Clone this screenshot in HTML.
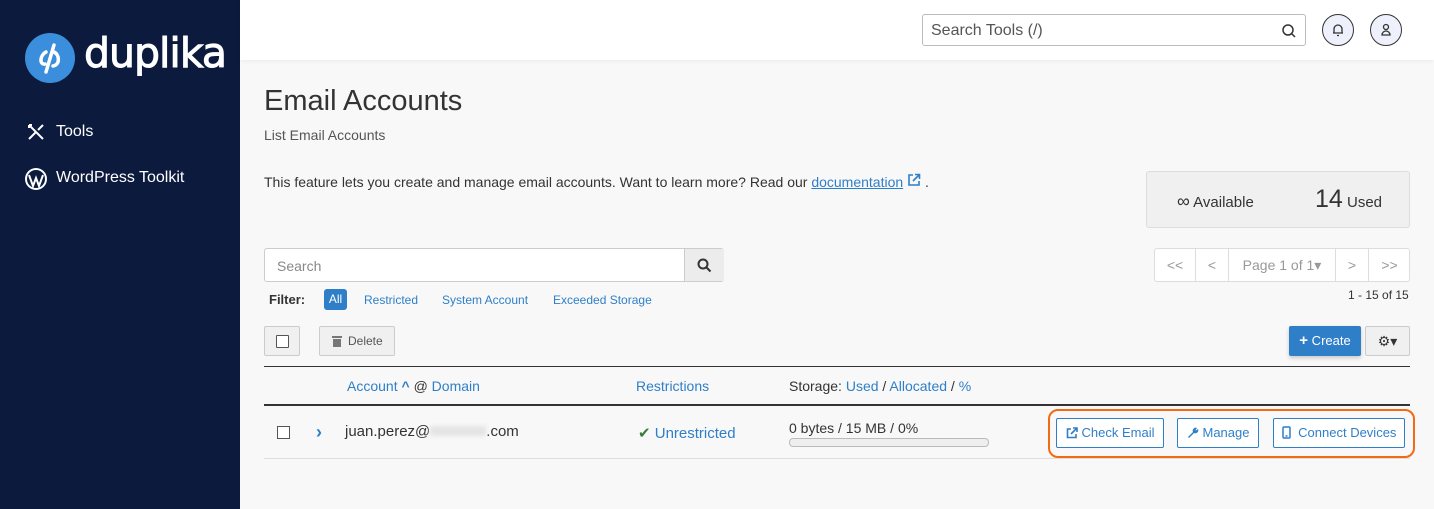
<!DOCTYPE html>
<html><head><meta charset="utf-8"><style>
*{box-sizing:border-box;margin:0;padding:0}
body{width:1434px;height:509px;overflow:hidden;font-family:"Liberation Sans",sans-serif;background:#f8f8f8;position:relative;color:#333}
.side{position:absolute;left:0;top:0;width:240px;height:509px;background:#0c1a3e}
.hdr{position:absolute;left:240px;top:0;right:0;height:60px;background:#fff;box-shadow:0 1px 4px rgba(0,0,0,.06)}
.abs{position:absolute}
a,.lnk{color:#2f7fc8}
.btn{position:absolute;border:1px solid #ccc;background:#f0f0f0;border-radius:2px}
.ob{position:absolute;border:1px solid #2f7fc8;border-radius:2px;color:#2f7fc8;font-size:13px;height:30px;line-height:28px;text-align:center;background:#fff}
.ob svg{vertical-align:-2px;margin-right:4px}
</style></head><body>
<div class="side">
 <svg class="abs" style="left:24px;top:32px" width="52" height="52" viewBox="0 0 52 52"><circle cx="26" cy="26" r="25" fill="#3a8edb"/><path d="M30 13 L22 40" stroke="#fff" stroke-width="3.5" stroke-linecap="round"/><path d="M22 20 C16 23 15 33 21 32 M30 20 C36 23 36 33 29 34" stroke="#fff" stroke-width="3.5" fill="none" stroke-linecap="round"/></svg>
 <div class="abs" style="left:84px;top:29px;color:#fff;font-size:41px;font-family:'DejaVu Sans',sans-serif;letter-spacing:-1px;-webkit-text-stroke:1px #fff">duplika</div>
 <svg class="abs" style="left:26px;top:122px" width="20" height="20" viewBox="0 0 20 20" stroke="#fff" stroke-width="2" fill="none"><path d="M3 17 L10 10 M12 8 L17 3 M3 3 L17 17 M3 3 l3 0 M3 3 l0 3"/></svg>
 <div class="abs" style="left:56px;top:123px;color:#fff;font-size:16px">Tools</div>
 <svg class="abs" style="left:24px;top:167px" width="24" height="24" viewBox="0 0 24 24"><circle cx="12" cy="12" r="11" fill="#fff"/><circle cx="12" cy="12" r="9" fill="#0c1a3e"/><path d="M5 8 L9 19 L12 11 L15 19 L19 8" stroke="#fff" stroke-width="2" fill="none"/></svg>
 <div class="abs" style="left:56px;top:169px;color:#fff;font-size:16px">WordPress Toolkit</div>
</div>
<div class="hdr">
 <div class="abs" style="left:682px;top:14px;width:384px;height:32px;border:1px solid #bbb;border-radius:3px;background:#fff"><span class="abs" style="left:8px;top:7px;font-size:16px;color:#555">Search Tools (/)</span>
 <svg class="abs" style="right:8px;top:8px" width="16" height="16" viewBox="0 0 16 16" fill="none" stroke="#333" stroke-width="1.5"><circle cx="7" cy="7" r="5"/><path d="M11 11 L14 14"/></svg></div>
 <div class="abs" style="left:1082px;top:14px;width:32px;height:32px;border:1.5px solid #333;border-radius:50%;background:#eef0fb"></div>
 <svg class="abs" style="left:1090px;top:22px" width="16" height="16" viewBox="0 0 16 16" fill="none" stroke="#333" stroke-width="1.3"><path d="M4 11 V7 a4 4 0 0 1 8 0 V11 Z M3 11 H13 M7 13.5 H9"/></svg>
 <div class="abs" style="left:1130px;top:14px;width:32px;height:32px;border:1.5px solid #333;border-radius:50%;background:#eef0fb"></div>
 <svg class="abs" style="left:1138px;top:22px" width="16" height="16" viewBox="0 0 16 16" fill="none" stroke="#333" stroke-width="1.3"><circle cx="8" cy="5" r="2.5"/><path d="M4 13 a4 4 0 0 1 8 0 Z"/></svg>
</div>
<div class="abs" style="left:264px;top:85px;font-size:29px;color:#333">Email Accounts</div>
<div class="abs" style="left:264px;top:127px;font-size:14px;color:#555">List Email Accounts</div>
<div class="abs" style="left:264px;top:173px;font-size:14px">This feature lets you create and manage email accounts. Want to learn more? Read our <span class="lnk" style="text-decoration:underline">documentation</span> <svg width="14" height="14" viewBox="0 0 14 14" fill="none" stroke="#2f7fc8" stroke-width="1.6"><path d="M6 2 H2 V12 H12 V8 M8 1.5 H12.5 V6 M12.5 1.5 L6 8"/></svg> .</div>
<div class="abs" style="left:1146px;top:171px;width:264px;height:57px;background:#f0f0f0;border:1px solid #ddd;border-radius:3px"></div>
<div class="abs" style="left:1177px;top:191px;font-size:15px;color:#333"><span style="font-size:18px">∞</span> Available</div>
<div class="abs" style="left:1315px;top:185px;font-size:15px;color:#333"><span style="font-size:25px">14</span> Used</div>
<div class="abs" style="left:1154px;top:248px;width:256px;height:34px;border:1px solid #ddd;border-radius:3px;background:#fff;font-size:14px;color:#999">
 <span class="abs" style="left:0;top:0;width:41px;height:32px;border-right:1px solid #ddd;text-align:center;line-height:32px">&lt;&lt;</span>
 <span class="abs" style="left:41px;top:0;width:33px;height:32px;border-right:1px solid #ddd;text-align:center;line-height:32px">&lt;</span>
 <span class="abs" style="left:74px;top:0;width:107px;height:32px;border-right:1px solid #ddd;text-align:center;line-height:32px">Page 1 of 1▾</span>
 <span class="abs" style="left:181px;top:0;width:33px;height:32px;border-right:1px solid #ddd;text-align:center;line-height:32px">&gt;</span>
 <span class="abs" style="left:214px;top:0;width:41px;height:32px;text-align:center;line-height:32px">&gt;&gt;</span>
</div>
<div class="abs" style="left:1348px;top:288px;font-size:12px;color:#333">1 - 15 of 15</div>
<div class="abs" style="left:264px;top:248px;width:460px;height:34px;border:1px solid #ccc;border-radius:3px;background:#fff"><span class="abs" style="left:12px;top:9px;font-size:14px;color:#888">Search</span>
 <div class="abs" style="left:419px;top:0;width:40px;height:32px;background:#ececec;border-left:1px solid #ccc"></div>
 <svg class="abs" style="left:432px;top:9px" width="15" height="15" viewBox="0 0 15 15" fill="none" stroke="#333" stroke-width="2"><circle cx="6" cy="6" r="4.5"/><path d="M9.5 9.5 L13.5 13.5"/></svg></div>
<div class="abs" style="left:269px;top:292px;font-size:13px;font-weight:bold">Filter:</div>
<div class="abs" style="left:324px;top:289px;width:23px;height:21px;background:#2f7fc8;border-radius:3px;color:#fff;font-size:12px;text-align:center;line-height:21px">All</div>
<div class="abs lnk" style="left:364px;top:293px;font-size:12px">Restricted</div>
<div class="abs lnk" style="left:442px;top:293px;font-size:12px">System Account</div>
<div class="abs lnk" style="left:553px;top:293px;font-size:12px">Exceeded Storage</div>
<div class="btn" style="left:264px;top:326px;width:36px;height:30px"><div class="abs" style="left:11px;top:8px;width:13px;height:13px;border:1.5px solid #555;background:#fff;border-radius:1px"></div></div>
<div class="btn" style="left:319px;top:326px;width:76px;height:30px;font-size:12px;color:#555;line-height:28px;padding-left:28px"><svg class="abs" style="left:12px;top:8px" width="10" height="12" viewBox="0 0 10 12" fill="#777"><rect x="0" y="1" width="10" height="2"/><rect x="1" y="4" width="8" height="8"/></svg>Delete</div>
<div class="abs" style="left:1289px;top:326px;width:72px;height:30px;background:#2f7fc8;border-radius:2px;color:#fff;font-size:13px;line-height:30px;text-align:center;box-shadow:0 2px 4px rgba(0,0,0,.2)"><b style="font-size:15px">+</b> Create</div>
<div class="btn" style="left:1365px;top:326px;width:45px;height:30px;text-align:center;line-height:28px;font-size:14px;color:#333">⚙▾</div>
<div class="abs" style="left:264px;top:366px;width:1146px;height:1px;background:#333"></div>
<div class="abs lnk" style="left:347px;top:378px;font-size:14px">Account <b>^</b> <span style="color:#333">@</span> Domain</div>
<div class="abs lnk" style="left:636px;top:378px;font-size:14px">Restrictions</div>
<div class="abs" style="left:789px;top:378px;font-size:14px">Storage: <span class="lnk">Used</span> / <span class="lnk">Allocated</span> / <span class="lnk">%</span></div>
<div class="abs" style="left:264px;top:404px;width:1146px;height:2px;background:#333"></div>
<div class="abs" style="left:264px;top:458px;width:1146px;height:1px;background:#ddd"></div>
<div class="abs" style="left:277px;top:426px;width:13px;height:13px;border:1.5px solid #555;background:#fff"></div>
<div class="abs lnk" style="left:316px;top:422px;font-size:18px;font-weight:bold">›</div>
<div class="abs" style="left:345px;top:423px;font-size:15px">juan.perez@<span style="display:inline-block;width:56px;height:10px;background:#e4e4e4;filter:blur(2px)"></span>.com</div>
<div class="abs" style="left:638px;top:424px;font-size:15px"><span style="color:#3a7d3a">✔</span> <span class="lnk">Unrestricted</span></div>
<div class="abs" style="left:789px;top:420px;font-size:14px">0 bytes / 15 MB / 0%</div>
<div class="abs" style="left:789px;top:438px;width:200px;height:9px;border:1px solid #bbb;border-radius:4px;background:#eee"></div>
<div class="abs" style="left:1048px;top:409px;width:367px;height:49px;border:2.5px solid #f26a12;border-radius:10px"></div>
<div class="ob" style="left:1056px;top:418px;width:108px"><svg width="12" height="12" viewBox="0 0 12 12" fill="none" stroke="#2f7fc8" stroke-width="1.6"><path d="M5 2 H1.5 V10.5 H10 V7 M7 1 H11 V5 M11 1 L5 7"/></svg>Check Email</div>
<div class="ob" style="left:1177px;top:418px;width:82px"><svg width="12" height="12" viewBox="0 0 12 12" fill="#2f7fc8"><path d="M1 10 L6 5 A3 3 0 0 1 10 1 L8.5 3 L9 3.5 L11 2 A3 3 0 0 1 7 6 L2 11 Z"/></svg>Manage</div>
<div class="ob" style="left:1273px;top:418px;width:132px"><svg width="9" height="13" viewBox="0 0 9 13" fill="none" stroke="#2f7fc8" stroke-width="1.5"><rect x="1" y="1" width="7" height="11" rx="1"/><path d="M3.5 10 H5.5"/></svg> Connect Devices</div>
</body></html>
